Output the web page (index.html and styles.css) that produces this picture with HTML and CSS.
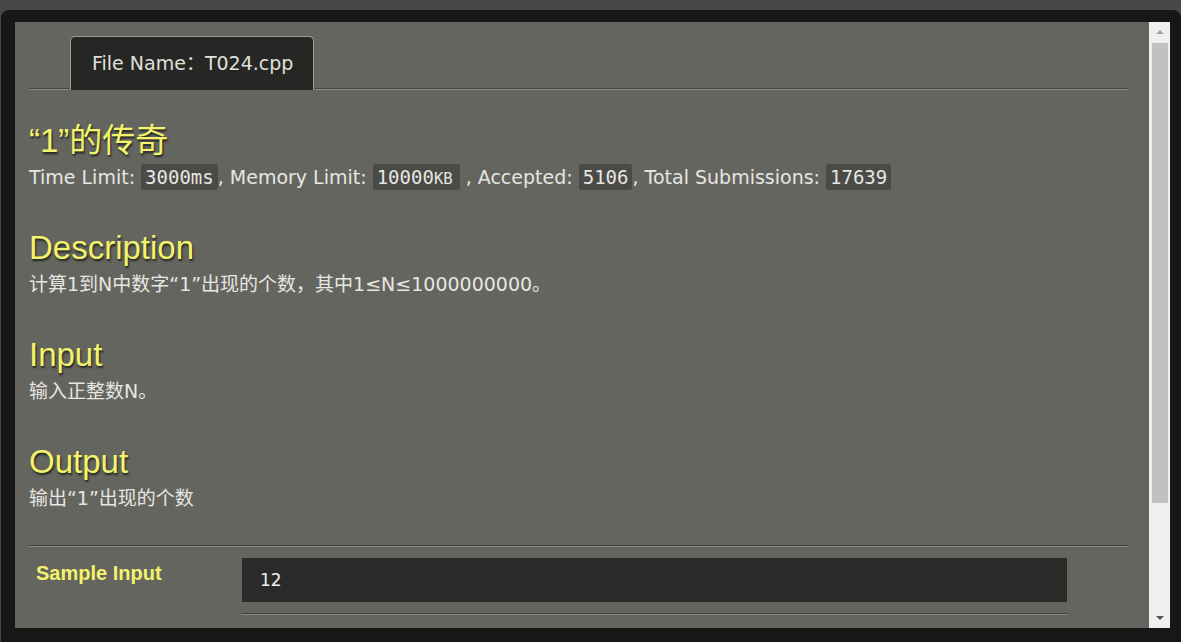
FILE: index.html
```html
<!DOCTYPE html>
<html>
<head>
<meta charset="utf-8">
<link rel="stylesheet" href="styles.css">
</head>
<body>
<div class="topstrip"></div>
<div class="frame">
  <div class="viewport">
    <div class="content">
      <div class="tabs">
        <div class="tab">File Name：T024.cpp</div>
      </div>
      <section class="sec">
        <h2 class="h">“1”的传奇</h2>
        <p class="txt">Time Limit: <code class="c">3000ms</code>, Memory Limit: <code class="c">10000<span class="sc">KB</span></code> , Accepted: <code class="c">5106</code>, Total Submissions: <code class="c">17639</code></p>
      </section>
      <section class="sec">
        <h2 class="h">Description</h2>
        <p class="txt">计算1到N中数字“1”出现的个数，其中1≤N≤1000000000。</p>
      </section>
      <section class="sec">
        <h2 class="h">Input</h2>
        <p class="txt">输入正整数N。</p>
      </section>
      <section class="sec last">
        <h2 class="h">Output</h2>
        <p class="txt">输出“1”出现的个数</p>
      </section>
      <div class="rule"></div>
      <div class="sample">
        <div class="label">Sample Input</div>
        <div class="samplecol">
          <div class="box">12</div>
          <div class="rule short"></div>
        </div>
      </div>
    </div>
    <div class="scrollbar">
      <div class="arrow up"></div>
      <div class="thumb"></div>
      <div class="spacer"></div>
      <div class="arrow down"></div>
    </div>
  </div>
</div>
</body>
</html>
```
FILE: styles.css
```css
html, body {
  margin: 0;
  padding: 0;
  background: #474747;
  overflow: hidden;
}
.topstrip {
  height: 10px;
  background: #484848;
}
.frame {
  margin-left: 1px;
  background: #171717;
  border-radius: 8px 8px 0 0;
  padding: 12px 11px 14px 14px;
  height: 606px;
}
.viewport {
  display: flex;
  height: 606px;
  overflow: hidden;
}
.content {
  flex: 1;
  background: #65655f;
  padding: 14px 20px 0 14px;
  overflow: hidden;
  font-family: "DejaVu Sans", "Noto Sans CJK SC", sans-serif;
  color: #e2e2de;
}
.tabs {
  display: flex;
  padding-left: 41px;
  border-bottom: 1px solid #8c8c86;
  box-shadow: 0 -1px 0 #45453f inset;
}
.tab {
  height: 54px;
  box-sizing: border-box;
  padding: 0 21px 5px;
  display: flex;
  align-items: center;
  background: #262624;
  border: 1px solid #9b9b96;
  border-bottom: none;
  border-radius: 5px 5px 0 0;
  font-size: 19px;
  color: #e0e0dc;
  margin-bottom: -1px;
  width: 244px;
  white-space: nowrap;
}
.sec {
  margin-bottom: 35px;
}
.sec:first-of-type {
  margin-top: 33px;
}
.sec.last {
  margin-bottom: 29px;
}
.h {
  margin: 0;
  height: 36px;
  font-family: "Liberation Sans", "Noto Sans CJK SC", sans-serif;
  font-weight: normal;
  font-size: 33px;
  line-height: 36px;
  color: #f3f36c;
  text-shadow: 1px 2px 2px #23231f;
}
.txt {
  margin: 0;
  height: 36px;
  font-size: 19px;
  line-height: 36px;
  color: #e6e6e2;
  white-space: nowrap;
}
.c {
  font-family: "DejaVu Sans Mono", monospace;
  font-size: 19px;
  background: #4a4a46;
  border-radius: 3px;
  padding: 2px 4px;
  color: #e6e6e2;
}
.sc {
  font-size: 0.82em;
  padding-right: 3px;
}
.rule {
  height: 0;
  border-top: 1px solid #45453f;
  border-bottom: 1px solid #8a8a84;
}
.sample {
  display: flex;
  padding-top: 11px;
}
.label {
  width: 206px;
  padding-left: 7px;
  padding-top: 4px;
  font-family: "Liberation Sans Narrow", "Liberation Sans", sans-serif;
  font-weight: bold;
  font-size: 20px;
  color: #f3f36c;
}
.samplecol {
  width: 825px;
}
.box {
  height: 44px;
  background: #2a2a29;
  padding-left: 18px;
  display: flex;
  align-items: center;
  font-family: "DejaVu Sans", sans-serif;
  font-size: 17px;
  color: #f0f0f0;
}
.short {
  margin-top: 11px;
}
.scrollbar {
  width: 21px;
  background: #f0f0f0;
  display: flex;
  flex-direction: column;
  align-items: center;
}
.arrow {
  width: 0;
  height: 0;
  border-left: 4px solid transparent;
  border-right: 4px solid transparent;
}
.arrow.up {
  margin-top: 8px;
  border-bottom: 4px solid #a3a3a3;
  margin-bottom: 9px;
}
.thumb {
  width: 16px;
  height: 460px;
  background: #c1c1c1;
}
.spacer {
  flex: 1;
}
.arrow.down {
  border-top: 4px solid #505050;
  margin-bottom: 8px;
}
```
